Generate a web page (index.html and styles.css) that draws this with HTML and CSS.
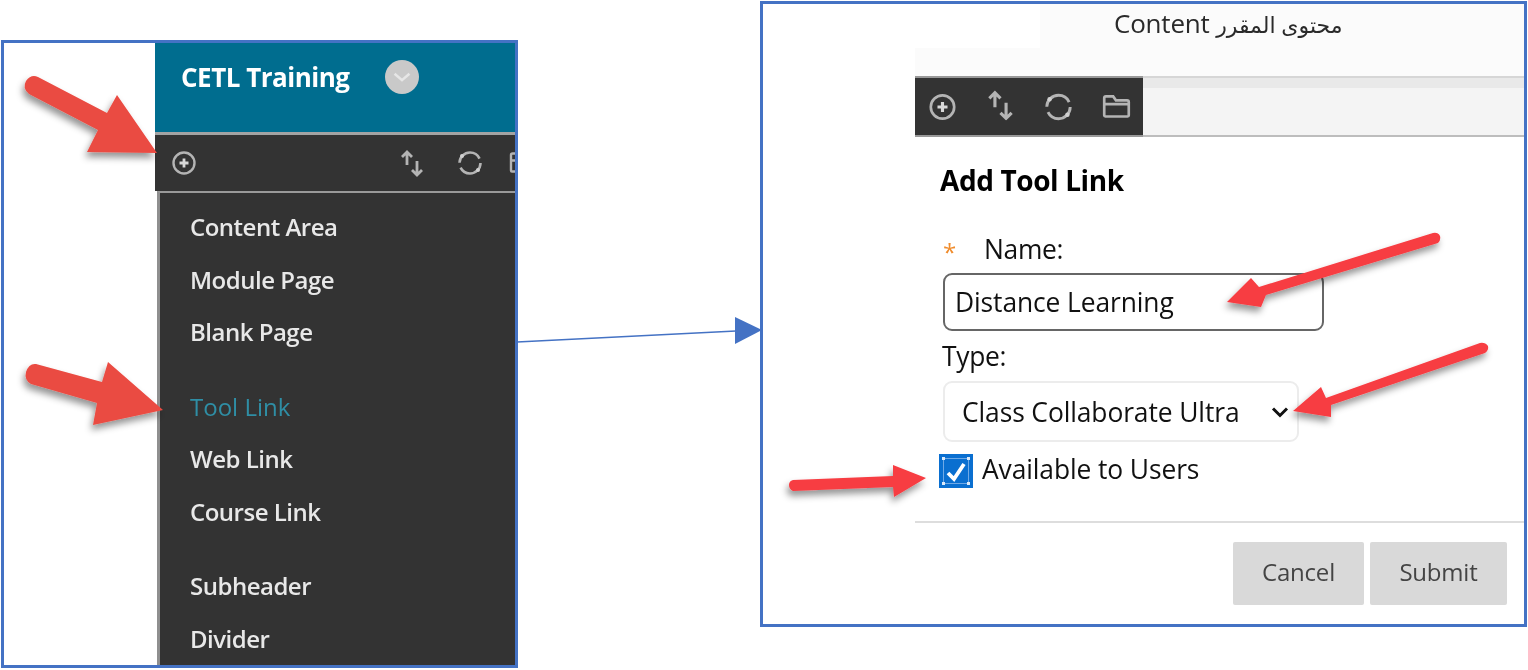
FILE: index.html
```html
<!DOCTYPE html>
<html lang="en">
<head>
<meta charset="utf-8">
<title>Add Tool Link</title>
<link rel="stylesheet" href="styles.css">
</head>
<body>
<div class="stage">
  <section class="win win-left">
    <div class="side-gap"></div>
    <div class="course">
      <header class="course-head">
        <span class="course-title">CETL Training</span>
        <span class="course-chev"><svg width="34" height="34" viewBox="0 0 32 32"><circle cx="16" cy="16" r="16" fill="#c9c9c9"/><path d="M9 13l7 6 7-6" fill="none" stroke="#e6e6e6" stroke-width="2.4"/></svg></span>
      </header>
      <div class="course-tools">
        <svg class="ic" width="26" height="26" viewBox="0 0 26 26"><use href="#i-add"/></svg>
        <span class="tools-space"></span>
        <div class="tools-right">
          <svg class="ic" width="26" height="28" viewBox="0 0 26 28"><use href="#i-sort"/></svg>
          <svg class="ic" width="26" height="26" viewBox="0 0 26 26"><use href="#i-sync"/></svg>
          <svg class="ic ic-folder" width="26" height="26" viewBox="0 0 26 26"><use href="#i-folder"/></svg>
        </div>
      </div>
      <nav class="menu">
        <div class="menu-group">
          <a class="menu-item">Content Area</a>
          <a class="menu-item">Module Page</a>
          <a class="menu-item">Blank Page</a>
        </div>
        <div class="menu-group">
          <a class="menu-item is-active">Tool Link</a>
          <a class="menu-item">Web Link</a>
          <a class="menu-item">Course Link</a>
        </div>
        <div class="menu-group">
          <a class="menu-item">Subheader</a>
          <a class="menu-item">Divider</a>
        </div>
      </nav>
    </div>
  </section>

  <section class="win win-right">
    <div class="top-row">
      <div class="top-white"></div>
      <div class="top-title">Content <span class="top-ar" lang="ar">محتوى المقرر</span></div>
    </div>
    <div class="form-area">
      <div class="bar-gap"></div>
      <div class="bar">
        <div class="bar-tools">
          <svg class="ic2" width="29" height="30" viewBox="0 0 26 26"><use href="#i-add"/></svg>
          <svg class="ic2 ic2-up" width="29" height="32" viewBox="0 0 26 28"><use href="#i-sort"/></svg>
          <svg class="ic2" width="29" height="30" viewBox="0 0 26 26"><use href="#i-sync"/></svg>
          <svg class="ic2" width="29" height="30" viewBox="0 0 26 26"><use href="#i-folder"/></svg>
        </div>
      </div>
      <form class="form">
        <h2 class="form-title">Add Tool Link</h2>
        <div class="name-label"><span class="star">*</span><span>Name:</span></div>
        <div class="field field-name">Distance Learning</div>
        <div class="type-label">Type:</div>
        <div class="field field-type">
          <span>Class Collaborate Ultra</span>
          <svg width="18" height="12" viewBox="0 0 18 12"><path d="M2 2.500l7 7 7-7" fill="none" stroke="#111" stroke-width="3"/></svg>
        </div>
        <div class="check-row">
          <span class="check"><svg width="34" height="34" viewBox="0 0 34 34"><path d="M4.500 4.500h25v25h-25z" fill="none" stroke="#6fa9e6" stroke-width="1"/><path d="M3 3h3v3H3zM28 3h3v3h-3zM3 28h3v3H3zM28 28h3v3h-3z" fill="#dbe9f8"/><path d="M9 19l6 6 10-15" fill="none" stroke="#fff" stroke-width="3.800"/></svg></span>
          <span class="check-label">Available to Users</span>
        </div>
      </form>
      <div class="actions">
        <span class="btn btn-cancel">Cancel</span>
        <span class="btn btn-submit">Submit</span>
      </div>
    </div>
  </section>

  <svg class="overlay" width="1528" height="670" viewBox="0 0 1528 670">
    <defs>
      <filter id="sh" x="-30%" y="-30%" width="170%" height="170%">
        <feDropShadow dx="-2" dy="5" stdDeviation="3.5" flood-color="#000" flood-opacity=".42"/>
      </filter>
      <symbol id="i-add" viewBox="0 0 26 26">
        <circle cx="13" cy="13" r="10.500" fill="none" stroke="#b4b4b4" stroke-width="2.400"/>
        <path d="M13 8.500v9M8.500 13h9" stroke="#d8d8d8" stroke-width="2.800"/>
      </symbol>
      <symbol id="i-sort" viewBox="0 0 26 28">
        <path d="M8 16V3M3 8l5-5 5 5M18 12v14M13 21l5 5 5-5" fill="none" stroke="#b4b4b4" stroke-width="2.800"/>
      </symbol>
      <symbol id="i-sync" viewBox="0 0 26 26">
        <circle cx="13" cy="13" r="10.500" fill="none" stroke="#b4b4b4" stroke-width="2.600" stroke-dasharray="28 5"/>
        <circle cx="5" cy="6" r="2" fill="#d0d0d0"/>
        <circle cx="21" cy="20" r="2" fill="#d0d0d0"/>
      </symbol>
      <symbol id="i-folder" viewBox="0 0 26 26">
        <path d="M3 21.500Q2 21.500 2 20.500V5Q2 3.500 3.500 3.500H10L12.500 7H22.500Q24 7 24 8.500V20.500Q24 21.500 23 21.500ZM2 10.500H24" fill="none" stroke="#b4b4b4" stroke-width="2.400"/>
      </symbol>
    </defs>
    <path class="conn" d="M517 342L736 331"/>
    <path class="conn-head" d="M735 317L762 330L735 344Z"/>
    <g class="arrow-a" filter="url(#sh)">
      <path d="M38 77L107 113L117 95L157 153L87 152L98 130L29 94Q22 88 26 81Q31 74 38 77Z"/>
      <path d="M36 364L102 382L108 362L163 410L93 425L97 403L31 384Q24 380 26 372Q29 363 36 364Z"/>
    </g>
    <g class="arrow-b" filter="url(#sh)">
      <path d="M1433 233L1259 287L1251 278L1227 302L1261 307L1266 295L1438 243Q1441 240 1440 236Q1438 232 1433 233Z"/>
      <path d="M1480 343L1326 398L1321 387L1293 411L1331 417L1331 405L1485 353Q1489 350 1488 346Q1485 342 1480 343Z"/>
      <path d="M793 480L893 476L893 465L926 478L894 497L893 487L793 491Q789 489 789 485Q789 481 793 480Z"/>
    </g>
  </svg>
</div>
</body>
</html>
```
FILE: styles.css
```css
* { box-sizing: border-box; }
html, body { margin: 0; padding: 0; background: #fff; }
body { font-family: "Open Sans", "DejaVu Sans", sans-serif; }

.stage { position: relative; width: 1528px; height: 670px; overflow: hidden; background: #fff; }

.win { position: absolute; border: 3px solid #4472c4; overflow: hidden; background: #fff; }
.win-left { left: 1px; top: 40px; width: 517px; height: 628px; display: flex; }
.win-right { left: 760px; top: 1px; width: 767px; height: 626px; display: flex; flex-direction: column; }

/* left window */
.side-gap { flex: 0 0 151px; }
.course { flex: 1; display: flex; flex-direction: column; min-width: 0; color: #e6e6e6; filter: blur(.4px); }
.course-head {
  flex: 0 0 92px; background: #006d8f; border-bottom: 3px solid #a3a3a3;
  display: flex; align-items: center; padding: 0 0 22px 26px; gap: 36px;
}
.course-title { font-size: 26px; font-weight: 700; letter-spacing: -.5px; color: #fff; line-height: 32px; }
.course-chev { display: flex; }
.course-tools { flex: 0 0 56px; background: #333; display: flex; align-items: center; padding: 0 0 0 16px; }
.tools-space { flex: 0 0 202px; }
.tools-right { display: flex; align-items: center; gap: 26px; }
.tools-right .ic + .ic:not(.ic-folder) { margin-left: 6px; }
.ic { flex: none; }
.menu {
  flex: 1; margin-left: 2px; background: #333; border-left: 3px solid #8f8f8f; border-top: 2px solid #9a9a9a;
  padding: 8px 0 0 30px; display: flex; flex-direction: column; gap: 22px;
}
.menu-group { display: flex; flex-direction: column; }
.menu-item { font-size: 24px; letter-spacing: -.5px; line-height: 52.500px; height: 52.500px; color: #e8e8e8; font-weight: 600; }
.is-active { color: #2f8ea5; font-weight: 400; letter-spacing: 0; }

/* right window */
.top-row { flex: 0 0 44px; display: flex; background: #fbfbfb; }
.top-white { flex: 0 0 277px; background: #fff; }
.top-title { padding: 0 0 0 74px; font-size: 26px; line-height: 38px; color: #2a2a2a; letter-spacing: -.2px; white-space: nowrap; filter: blur(.3px); }
.top-ar { font-size: 22px; }
.form-area { flex: 1; margin-left: 152px; display: flex; flex-direction: column; background: #fff; }
.bar-gap { flex: 0 0 28px; background: #fbfbfb; }
.bar { flex: 0 0 61px; background: #f4f4f4; border-top: 2px solid #d6d6d6; border-bottom: 2px solid #bdbdbd; display: flex; box-shadow: inset 0 10px 0 #e9e9e9; }
.bar-tools { flex: 0 0 228px; margin: -2px 0; background: #333; border-top: 2px solid #999; border-bottom: 2px solid #999; display: flex; align-items: center; justify-content: space-between; padding: 0 12px 0 13px; }
.ic2 { flex: none; }
.ic2-up { margin-top: -3px; }

.form { flex: 1; padding: 25px 0 0 25px; display: flex; flex-direction: column; align-items: flex-start; font-size: 26.400px; color: #111; letter-spacing: -.1px; border-bottom: 2px solid #ddd; filter: blur(.3px); }
.form-title { margin: 0; font-size: 28px; line-height: 36px; font-weight: 700; color: #000; letter-spacing: -.4px; }
.name-label { margin-top: 33px; display: flex; line-height: 36px; height: 36px; letter-spacing: -.3px; }
.star { color: #f08c2c; width: 44px; padding: 3px 0 0 3px; font-size: 24px; }
.field { margin-left: 3px; background: #fff; display: flex; align-items: center; }
.field-name { margin-top: 6px; width: 381px; height: 58px; border: 2px solid #666; border-radius: 9px; padding-left: 10px; }
.type-label { margin-top: 7px; margin-left: 2px; line-height: 36px; height: 42px; letter-spacing: -.3px; }
.field-type { margin-top: 1px; width: 356px; height: 61px; border: 2px solid #ececec; border-radius: 9px; padding: 0 8px 0 17px; justify-content: space-between; }
.check-row { margin-top: 12px; margin-left: -1px; display: flex; align-items: center; gap: 9px; line-height: 34px; height: 34px; }
.check { width: 34px; height: 34px; background: #0a6fd0; display: flex; }
.check-label { padding-bottom: 4px; }
.actions { flex: 0 0 101px; display: flex; justify-content: flex-end; gap: 6px; padding: 19px 17px 0 0; }
.btn { height: 63px; padding-bottom: 4px; background: #d9d9d9; border-radius: 2px; display: flex; align-items: center; justify-content: center; font-size: 24px; letter-spacing: -.2px; color: #444; filter: blur(.3px); }
.btn-cancel { width: 131px; }
.btn-submit { width: 137px; }

/* overlay */
.overlay { position: absolute; left: 0; top: 0; pointer-events: none; }
.conn { stroke: #4472c4; stroke-width: 1.400; fill: none; }
.conn-head { fill: #4472c4; }
.arrow-a { fill: #ea4b43; }
.arrow-b { fill: #f73c42; }
```
